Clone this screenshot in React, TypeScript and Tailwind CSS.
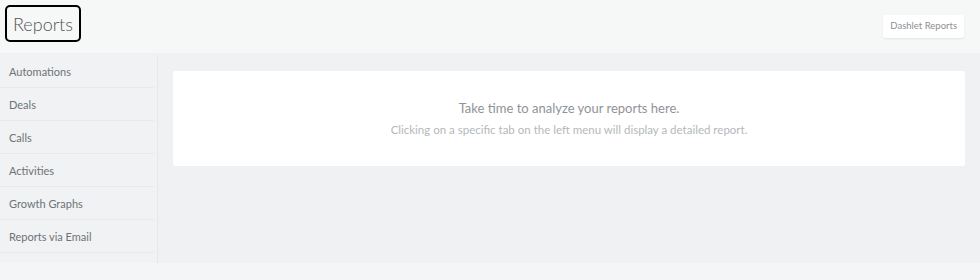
const menu = ['Automations', 'Deals', 'Calls', 'Activities', 'Growth Graphs', 'Reports via Email'];

const App = () => {
    return (
        <div className="w-[980px] h-[280px] bg-[#eff1f2] flex flex-col font-['Lato','Liberation_Sans',sans-serif]">
            {/* header */}
            <div className="h-[53px] bg-[#f6f7f7] flex items-start justify-between shrink-0">
                <div className="ml-[5px] mt-[5px] h-[37px] px-[6px] border-2 border-black rounded-[5px] flex items-center">
                    <span className="text-[18px] font-light text-[#555] leading-none">Reports</span>
                </div>
                <button className="mt-[15px] mr-[16px] h-[23px] px-[7px] bg-white text-[9.5px] text-[#8c8f92] shadow-[0_1px_2px_rgba(0,0,0,0.08)] rounded-[2px]">
                    Dashlet Reports
                </button>
            </div>

            <div className="flex flex-1">
                {/* sidebar */}
                <div className="w-[158px] h-[208px] mt-[2px] bg-[#f0f2f3] border-r border-[#e6e8e9] shrink-0">
                    {menu.map((m) => (
                        <div
                            key={m}
                            className="h-[33px] pl-[9px] pt-[3px] flex items-center text-[11px] text-[#6f7377] border-b border-[#e7e9ea] mr-[3px]">
                            {m}
                        </div>
                    ))}
                </div>

                {/* content */}
                <div className="flex-1 pl-[15px] pr-[15px] pt-[18px]">
                    <div className="h-[95px] bg-white rounded-[2px] flex flex-col items-center justify-center">
                        <p className="text-[13px] text-[#909396] leading-none">Take time to analyze your reports here.</p>
                        <p className="text-[11.5px] text-[#b5b8ba] leading-none mt-[9px]">
                            Clicking on a specific tab on the left menu will display a detailed report.
                        </p>
                    </div>
                </div>
            </div>
            <div className="h-[18px] bg-[#f4f5f6] shrink-0" />
        </div>
    );
};

export default App;
